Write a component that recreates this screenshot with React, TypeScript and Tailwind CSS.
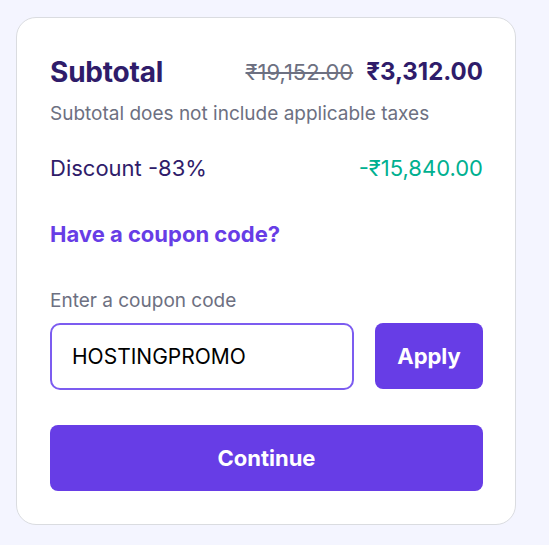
import { useState } from 'react'

export default function App() {
  const [code, setCode] = useState('HOSTINGPROMO')

  return (
    <div className="min-h-screen bg-[#f4f5ff] pl-4 pt-[17px] pb-5 font-['Inter',sans-serif]">
      <div className="w-[500px] rounded-[20px] border border-[#dadce0] bg-white pl-[33px] pr-[32px] pt-[38px] pb-[33px]">
        <div className="flex items-center justify-between">
          <h3 className="text-[28px] leading-8 font-bold tracking-[-0.2px] text-[#2f1c6a]">Subtotal</h3>
          <div className="flex items-center gap-[13px]">
            <span className="text-[22px] leading-8 text-[#6d7081] line-through">₹19,152.00</span>
            <span className="text-2xl leading-8 font-bold text-[#2f1c6a]">₹3,312.00</span>
          </div>
        </div>
        <p className="mt-[14px] text-[19px] leading-6 text-[#6d7081]">
          Subtotal does not include applicable taxes
        </p>

        <div className="mt-[28px] flex items-center justify-between text-[22px] leading-7">
          <span className="text-[#2f1c6a]">Discount -83%</span>
          <span className="text-[#00b090]">-₹15,840.00</span>
        </div>

        <button className="mt-[38px] block text-[22px] leading-7 font-bold text-[#673de6]">
          Have a coupon code?
        </button>

        <label htmlFor="coupon" className="mt-[41px] block text-[19px] leading-6 text-[#6d7081]">
          Enter a coupon code
        </label>
        <div className="mt-[10px] flex gap-[21px]">
          <input
            id="coupon"
            autoFocus
            value={code}
            onChange={(e) => setCode(e.target.value)}
            className="h-[67px] w-[304px] rounded-[10px] border-2 border-[#7c5cf0] px-5 text-[21px] text-black outline-none"
          />
          <button className="h-[66px] w-[108px] rounded-[8px] bg-[#673de6] text-[22px] font-bold text-white">
            Apply
          </button>
        </div>

        <button className="mt-[35px] h-[66px] w-full rounded-[8px] bg-[#673de6] text-[22px] font-bold text-white">
          Continue
        </button>
      </div>
    </div>
  )
}
